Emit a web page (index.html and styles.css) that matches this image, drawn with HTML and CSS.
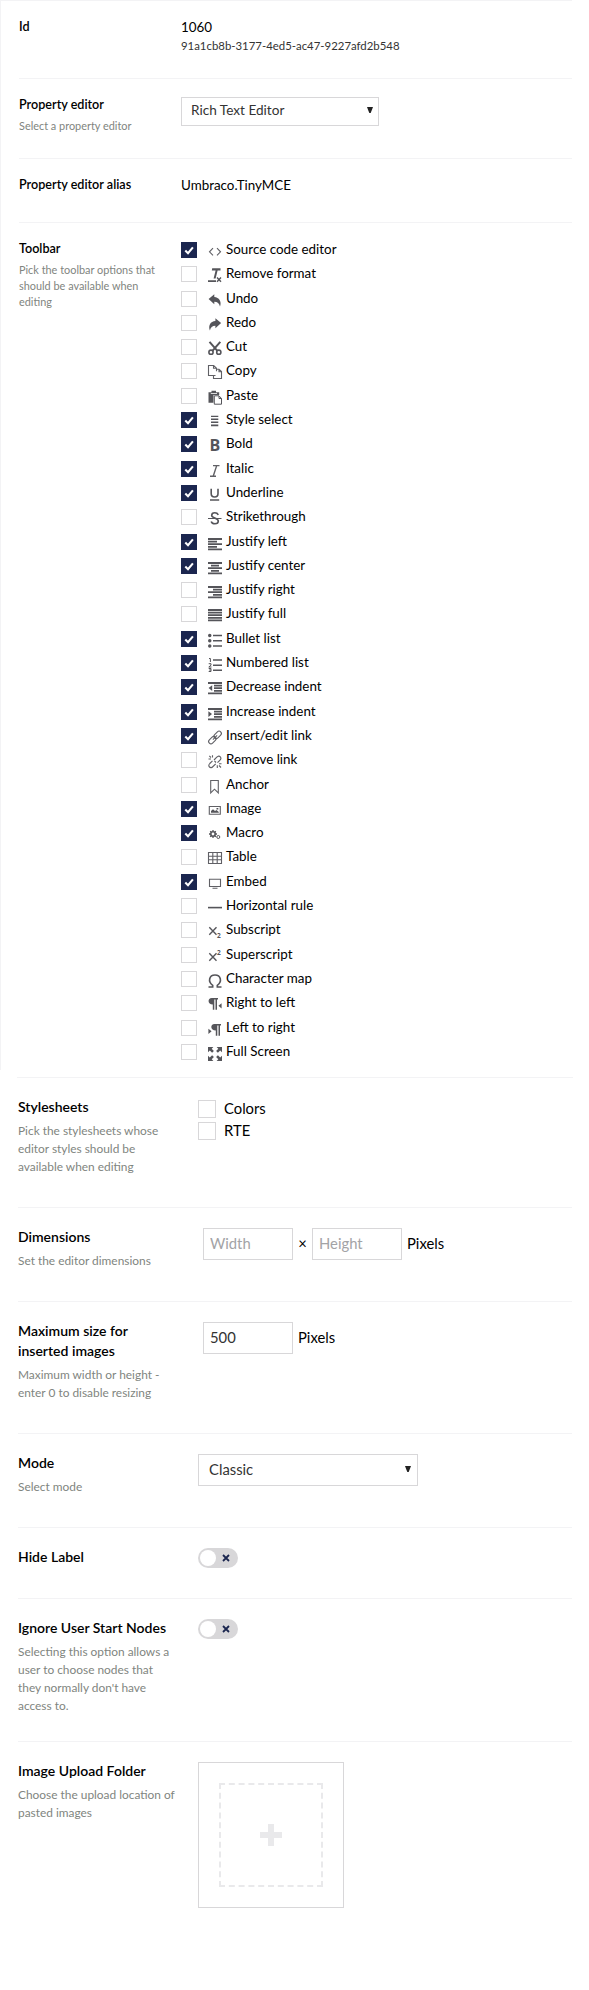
FILE: index.html
```html
<!DOCTYPE html>
<html lang="en">
<head>
<meta charset="utf-8">
<title>Data type</title>
<link rel="stylesheet" href="styles.css">
</head>
<body>
<svg width="0" height="0" class="defs"><symbol id="tick" viewBox="0 0 16 16"><path d="M4.3 8.6 7 11.2 11.9 5.4" fill="none" stroke="#fff" stroke-width="2.1"/></symbol></svg>
<main>
<section class="panel compact">
  <div class="row r-id"><div class="label"><h3>Id</h3></div><div class="value"><p>1060</p><p class="guid">91a1cb8b-3177-4ed5-ac47-9227afd2b548</p></div></div>
  <div class="row r-editor"><div class="label"><h3>Property editor</h3><p>Select a property editor</p></div><div class="value"><div class="select">Rich Text Editor<svg class="arrow" viewBox="0 0 6 6"><path d="M0 0H6L3.7 6H2.3Z"/></svg></div></div></div>
  <div class="row r-alias"><div class="label"><h3>Property editor alias</h3></div><div class="value"><p>Umbraco.TinyMCE</p></div></div>
  <div class="row r-toolbar"><div class="label"><h3>Toolbar</h3><p>Pick the toolbar options that should be available when editing</p></div>
  <ul class="value tools">
    <li><i class="box on"><svg><use href="#tick"/></svg></i><svg class="ico line" viewBox="0 0 14 16"><path d="M5 4.2 1.5 7.8 5 11.4M9 4.2 12.5 7.8 9 11.4"/></svg>Source code editor</li>
    <li><i class="box"></i><svg class="ico" viewBox="0 0 14 16"><path d="M4.2.2H12.5V2.4H9.6L7.6 10.6H5.6L7.6 2.4H3.8ZM0 12.2H8V14H0Z"/><path class="s" d="M9 9.5 13 13.7M13 9.5 9 13.7"/></svg>Remove format</li>
    <li><i class="box"></i><svg class="ico" viewBox="0 0 14 16"><path d="M.6 6 6.3 1.3V3.9C11 4.2 14 8.3 12 13.6 11.3 10.4 9.5 8.9 6.3 8.8V11.2Z"/></svg>Undo</li>
    <li><i class="box"></i><svg class="ico" viewBox="0 0 14 16"><path d="M13.1 6 7.4 1.3V3.9C2.5 4.2-.1 8.3 1.9 13.6 2.5 10.4 4.3 8.9 7.4 8.8V11.2Z"/></svg>Redo</li>
    <li><i class="box"></i><svg class="ico mid" viewBox="0 0 14 16"><path class="blade" d="M1.5.8 9.4 9.8M12.3.8 4.4 9.8"/><circle cx="3" cy="11.2" r="2.1"/><circle cx="10.8" cy="11.2" r="2.1"/></svg>Cut</li>
    <li><i class="box"></i><svg class="ico line" viewBox="0 0 14 16"><path d="M7.5 10.5H.5V.5H5.7L8.5 3.2V6.3M5.5.7V3.3H8.5M5.5 10.7V13.5H13.5V6.5L11 4.2H8.5M11 4.2V6.7H13.5"/></svg>Copy</li>
    <li><i class="box"></i><svg class="ico" viewBox="0 0 14 16"><path d="M.5 2.3H3.5V.8H8V2.3H11.2V5H5.5V12.8H.5Z"/><path class="t" d="M6.3 5.8H11L13.5 8.5V14.2H6.3ZM11 6V8.5H13.5"/><path class="w" d="M2.8 3.5H9"/></svg>Paste</li>
    <li><i class="box on"><svg><use href="#tick"/></svg></i><svg class="ico" viewBox="0 0 14 16"><path d="M3 1.8H10.3V3H3ZM3 4.5H10.3V6H3ZM3 7.5H10.3V9H3ZM3 10.6H10.3V12.2H3Z"/></svg>Style select</li>
    <li><i class="box on"><svg><use href="#tick"/></svg></i><svg class="ico" viewBox="0 0 14 16"><text class="b" x="1.4" y="13">B</text></svg>Bold</li>
    <li><i class="box on"><svg><use href="#tick"/></svg></i><svg class="ico line heavy" viewBox="0 0 14 16"><path d="M5 2.6H11.5M2 13.3H8M8.7 2.6 5.2 13.3"/></svg>Italic</li>
    <li><i class="box on"><svg><use href="#tick"/></svg></i><svg class="ico mid" viewBox="0 0 14 16"><path d="M3.2 1.8V6.5Q3.2 10 6.6 10T10 6.5V1.8M2 13H11.2"/></svg>Underline</li>
    <li><i class="box"></i><svg class="ico mid" viewBox="0 0 14 16"><path d="M10.3 3.8Q9.3 1.8 6.8 1.8 3.7 1.8 3.7 4.4C3.7 7.3 10.3 6.5 10.3 10 10.3 12.3 8.5 12.8 7 12.8 5 12.8 3.7 12 3.2 10.5"/><path class="t" d="M0 7.5H13.5"/></svg>Strikethrough</li>
    <li><i class="box on"><svg><use href="#tick"/></svg></i><svg class="ico bars" viewBox="0 0 14 16"><path d="M0 3H14M0 5.6H9M0 8.2H14M0 10.8H9M0 13.4H14"/></svg>Justify left</li>
    <li><i class="box on"><svg><use href="#tick"/></svg></i><svg class="ico bars" viewBox="0 0 14 16"><path d="M0 3H14M3 5.6H11M0 8.2H14M3 10.8H11M0 13.4H14"/></svg>Justify center</li>
    <li><i class="box"></i><svg class="ico bars" viewBox="0 0 14 16"><path d="M0 3H14M5 5.6H14M0 8.2H14M5 10.8H14M0 13.4H14"/></svg>Justify right</li>
    <li><i class="box"></i><svg class="ico bars" viewBox="0 0 14 16"><path d="M0 2H14M0 4.6H14M0 7.2H14M0 9.8H14M0 12.4H14"/></svg>Justify full</li>
    <li><i class="box on"><svg><use href="#tick"/></svg></i><svg class="ico mid" viewBox="0 0 14 16"><path d="M5 2.5H14M5 7.7H14M5 13H14"/><path class="dot" d="M1.7 2.5H1.8M1.7 7.7H1.8M1.7 13H1.8"/></svg>Bullet list</li>
    <li><i class="box on"><svg><use href="#tick"/></svg></i><svg class="ico mid" viewBox="0 0 14 16"><path d="M5 3H14M5 8.2H14M5 13.3H14"/><path class="t" d="M1 1.5H2.4V5M.7 6.7H3V8.2L.8 10H3.5M.7 11.5H3V14.5H.7M1.2 13H3"/></svg>Numbered list</li>
    <li><i class="box on"><svg><use href="#tick"/></svg></i><svg class="ico bars" viewBox="0 0 14 16"><path d="M0 2H14M6 4.6H14M6 7.2H14M6 9.8H14M0 12.4H14"/><path class="f" d="M4.2 4.2V10L.6 7.1Z"/></svg>Decrease indent</li>
    <li><i class="box on"><svg><use href="#tick"/></svg></i><svg class="ico bars" viewBox="0 0 14 16"><path d="M0 3H14M6 5.6H14M6 8.2H14M6 10.8H14M0 13.4H14"/><path class="f" d="M.4 5.2V11L4 8.1Z"/></svg>Increase indent</li>
    <li><i class="box on"><svg><use href="#tick"/></svg></i><svg class="ico line" viewBox="0 0 14 16"><g transform="rotate(-45 7 7.5)"><rect x="-1" y="5.2" width="8.5" height="4.6" rx="2.3"/><rect x="6.5" y="5.2" width="8.5" height="4.6" rx="2.3"/><path d="M4 7.5H10"/></g></svg>Insert/edit link</li>
    <li><i class="box"></i><svg class="ico line" viewBox="0 0 14 16"><path d="M6 6 8.8 3.2Q10.8 1.2 12.3 2.8T11.8 6.3L9.5 8.7M4.5 6.8 1.8 9.5Q0 11.5 1.5 13T5 12.5L7.7 9.8M6.5 7 8 8.5M.5 5H3M4.5 1.2V3.5M1.3 1.8 3 3.5M11 9.8H13.5M9.3 11.3V14M11 11.5 13 13.5"/></svg>Remove link</li>
    <li><i class="box"></i><svg class="ico line" viewBox="0 0 14 16"><path d="M2.7 1.5H10.3V14L6.5 10.2 2.7 14Z"/></svg>Anchor</li>
    <li><i class="box on"><svg><use href="#tick"/></svg></i><svg class="ico line" viewBox="0 0 14 16"><path d="M1.3 3.5H12.3V11.2H1.3Z"/><path class="f" d="M3 9.8V8L5 6.2 7 8 8.5 7 10.8 9V9.8ZM8.5 5H10.3V6.5H8.5Z"/></svg>Image</li>
    <li><i class="box on"><svg><use href="#tick"/></svg></i><svg class="ico mid" viewBox="0 0 14 16"><circle cx="5" cy="7" r="2.2"/><path class="teeth" d="M5 3V4.6M5 9.4V11M1 7H2.6M7.4 7H9M2.2 4.2 3.3 5.3M7.8 4.2 6.7 5.3M2.2 9.8 3.3 8.7M7.8 9.8 6.7 8.7"/><circle class="t" cx="10.3" cy="10" r="1.5"/></svg>Macro</li>
    <li><i class="box"></i><svg class="ico line" viewBox="0 0 14 16"><path d="M.5 1.5H13.5V12.5H.5ZM.5 5.2H13.5M.5 8.8H13.5M4.8 1.5V12.5M9.2 1.5V12.5"/></svg>Table</li>
    <li><i class="box on"><svg><use href="#tick"/></svg></i><svg class="ico line" viewBox="0 0 14 16"><path d="M1.5 3.3H12.5V10.5H1.5ZM4.5 12.3H9.5"/></svg>Embed</li>
    <li><i class="box"></i><svg class="ico mid" viewBox="0 0 14 16"><path d="M0 7.6H14"/></svg>Horizontal rule</li>
    <li><i class="box"></i><svg class="ico" viewBox="0 0 14 16"><path class="s" d="M1.3 3.3 8.5 10.7M8.5 3.3 1.3 10.7"/><text class="n" x="9" y="14.3">2</text></svg>Subscript</li>
    <li><i class="box"></i><svg class="ico" viewBox="0 0 14 16"><path class="s" d="M1.3 4.3 8.5 11.7M8.5 4.3 1.3 11.7"/><text class="n" x="9" y="5.5">2</text></svg>Superscript</li>
    <li><i class="box"></i><svg class="ico mid" viewBox="0 0 14 16"><path d="M.5 14H4.7V12.3C-.5 8.5 1.2 2 7 2S14.5 8.5 9.3 12.3V14H13.5"/></svg>Character map</li>
    <li><i class="box"></i><svg class="ico" viewBox="0 0 14 16"><path d="M3.8 1H10V2.6H9V12.8H7.5V2.6H6.3V12.8H4.8V7.5C-.6 7.5-.6 1 3.8 1ZM13.6 6.2V11.4L10.4 8.8Z"/></svg>Right to left</li>
    <li><i class="box"></i><svg class="ico" viewBox="0 0 14 16"><path d="M6.5 2H13V3.6H12V13.8H10.5V3.6H9.3V13.8H7.8V8.5C2.1 8.5 2.1 2 6.5 2ZM.4 6.7V11.9L3.6 9.3Z"/></svg>Left to right</li>
    <li><i class="box"></i><svg class="ico" viewBox="0 0 14 16"><path d="M0 1H5.4L3.7 2.7 5.9 4.9 4.1 6.7 1.8 4.5 0 6.3ZM14 1V6.3L12.2 4.5 9.9 6.7 8.1 4.9 10.3 2.7 8.6 1ZM0 15V9.7L1.8 11.5 4.1 9.3 5.9 11.1 3.7 13.3 5.4 15ZM14 15H8.6L10.3 13.3 8.1 11.1 9.9 9.3 12.2 11.5 14 9.7Z"/></svg>Full Screen</li>
  </ul></div>
</section>
<section class="panel roomy">
  <div class="row r-styles"><div class="label"><h3>Stylesheets</h3><p>Pick the stylesheets whose editor styles should be available when editing</p></div>
    <ul class="value sheets"><li><i class="box"></i>Colors</li><li><i class="box"></i>RTE</li></ul></div>
  <div class="row r-dim"><div class="label"><h3>Dimensions</h3><p>Set the editor dimensions</p></div><div class="value fields"><input placeholder="Width"><span class="times">×</span><input placeholder="Height"><span>Pixels</span></div></div>
  <div class="row r-max"><div class="label"><h3>Maximum size for inserted images</h3><p>Maximum width or height - enter 0 to disable resizing</p></div><div class="value fields"><input value="500"><span>Pixels</span></div></div>
  <div class="row r-mode"><div class="label"><h3>Mode</h3><p>Select mode</p></div><div class="value"><div class="select">Classic<svg class="arrow" viewBox="0 0 6 6"><path d="M0 0H6L3.7 6H2.3Z"/></svg></div></div></div>
  <div class="row r-hide"><div class="label"><h3>Hide Label</h3></div><div class="value"><div class="toggle"><i></i><svg viewBox="0 0 8 8"><path d="M1 1 7 7M7 1 1 7"/></svg></div></div></div>
  <div class="row r-ignore"><div class="label"><h3>Ignore User Start Nodes</h3><p>Selecting this option allows a user to choose nodes that they normally don't have access to.</p></div><div class="value"><div class="toggle"><i></i><svg viewBox="0 0 8 8"><path d="M1 1 7 7M7 1 1 7"/></svg></div></div></div>
  <div class="row r-upload"><div class="label"><h3>Image Upload Folder</h3><p>Choose the upload location of pasted images</p></div><div class="value"><div class="drop"><div class="dash"><svg viewBox="0 0 22 22"><path d="M8 0H14V8H22V14H14V22H8V14H0V8H8Z"/></svg></div></div></div></div>
</section>
</main>
</body>
</html>
```
FILE: styles.css
```css
* { box-sizing: border-box; }
body { margin: 0; background: #fff; color: #000; font-family: Lato, sans-serif; height: 1990px; overflow: hidden; }
.defs { position: absolute; }
h3, p, ul { margin: 0; padding: 0; }
li { list-style: none; }
h3 { font-weight: 600; }
.label p { color: #7f8580; }
.row { display: flex; border-bottom: 1px solid #f3f3f5; margin-right: 17px; }
.compact { border-left: 1px solid #f3f3f5; height: 1070px; }
.compact::before { content: ""; display: block; height: 1px; background: #f3f3f5; margin-right: 17px; }
.compact .row { margin-left: 18px; }
.compact .label { width: 162px; padding-right: 18px; flex: none; }
.compact h3 { font-size: 12.6px; line-height: 18px; }
.compact .label p { font-size: 10.9px; line-height: 16px; margin-top: 4px; }
.compact .value { font-size: 13.4px; line-height: 18px; }
.compact .guid { font-size: 11.4px; color: #333; padding-top: 1px; }
.r-id { height: 78px; padding-top: 17px; }
.r-editor { height: 80px; padding-top: 17px; }
.r-alias { height: 64px; padding-top: 17px; }
.compact .r-toolbar { height: 847px; padding-top: 17px; border: 0; }
.r-editor .value { padding-top: 1px; }
.select { display: flex; align-items: center; justify-content: space-between; border: 1px solid #d8d7d9; color: #333; }
.compact .select { width: 198px; height: 29px; font-size: 13.6px; padding: 0 5px 3px 9px; }
.arrow { width: 6px; height: 6px; fill: #222; }
.tools { padding-top: 2px; }
.tools li { display: flex; align-items: flex-start; height: 24.3px; }
.compact .tools { line-height: 14px; }
.box { width: 16px; height: 16px; border: 1px solid #d8d7d9; flex: none; display: block; }
.box.on { background: #1b264f; border: 0; }
.box svg { width: 16px; height: 16px; display: block; }
.ico { width: 14px; height: 16px; margin: 2px 4px 0 11px; flex: none; fill: #55555a; stroke: none; overflow: visible; }
.ico .s { stroke: #55555a; stroke-width: 1.4; }
.ico .t, .line .t { fill: none; stroke: #55555a; stroke-width: 1; }
.ico .w { stroke: #fff; stroke-width: .8; }
.ico.line { fill: none; stroke: #606065; stroke-width: 1.1; }
.ico.heavy { stroke-width: 1.4; }
.ico.mid { fill: none; stroke: #55555a; stroke-width: 1.6; }
.mid .blade { stroke-width: 2; }
.mid .dot { stroke-width: 3.4; stroke-linecap: round; }
.mid .teeth { stroke-width: 1.3; }
.ico.bars { fill: none; stroke: #55555a; stroke-width: 1.8; }
.ico .f { fill: #55555a; stroke: none; }
.ico .b { font: bold 16px "Open Sans", sans-serif; }
.ico .n { font: bold 6.5px "Open Sans", sans-serif; }
.roomy { border-top: 1px solid; border-image: linear-gradient(to right, #fff 18px, #f3f3f5 18px, #f3f3f5 572px, #fff 572px) 1; margin-top: 7px; }
.roomy .row { margin-left: 18px; }
.roomy .label { width: 180px; padding-right: 20px; flex: none; }
.roomy h3 { font-size: 14px; line-height: 20px; }
.roomy .label p { font-size: 11.9px; line-height: 18px; margin-top: 5px; }
.roomy .value { font-size: 14.8px; line-height: 18px; }
.r-styles { height: 130px; padding-top: 19px; }
.r-dim { height: 94px; padding-top: 19px; }
.r-max { height: 132px; padding-top: 19px; }
.r-mode { height: 94px; padding-top: 19px; }
.r-hide { height: 71px; padding-top: 19px; }
.r-ignore { height: 143px; padding-top: 19px; }
.roomy .r-upload { border: 0; padding-top: 19px; }
.sheets { padding-top: 3px; }
.sheets li { display: flex; gap: 8px; height: 22px; line-height: 16px; }
.sheets .box { width: 18px; height: 18px; }
.fields { display: flex; align-items: center; height: 32px; margin: 1px 0 0 5px; }
.fields input { width: 90px; height: 32px; border: 1px solid #d8d7d9; padding: 0 6px 3px; margin: 0; font: 14.8px Lato, sans-serif; color: #333; }
.fields input::placeholder { color: #a3a3a6; }
.fields span { margin-left: 5px; padding-bottom: 3px; }
.fields .times { margin: 0 5px; width: 9px; text-align: center; }
.r-mode .value { padding-top: 1px; }
.roomy .select { width: 220px; height: 32px; padding: 0 6px 3px 10px; }
.toggle { width: 40px; height: 20px; margin-top: 1px; border-radius: 10px; background: #d8d7d9; display: flex; align-items: center; padding: 0 8px 0 2px; justify-content: space-between; }
.toggle i { width: 16px; height: 16px; border-radius: 50%; background: #fff; }
.toggle svg { width: 8px; height: 8px; fill: none; stroke: #1b264f; stroke-width: 1.8; }
.drop { width: 146px; height: 146px; margin-top: 1px; border: 1px solid #d8d7d9; display: flex; align-items: center; justify-content: center; }
.dash { width: 104px; height: 104px; border: 2px dashed #e9e9eb; display: flex; align-items: center; justify-content: center; }
.dash svg { width: 22px; height: 22px; fill: #e9e9eb; }
```
